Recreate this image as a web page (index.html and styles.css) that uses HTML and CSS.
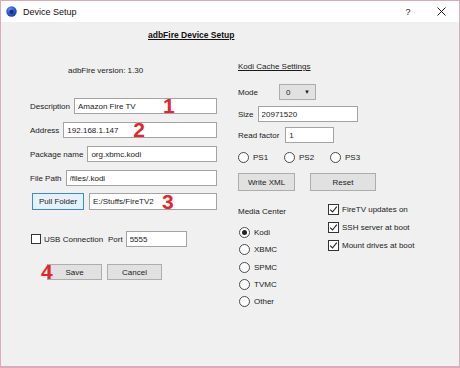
FILE: index.html
```html
<!DOCTYPE html>
<html lang="en">
<head>
  <meta charset="UTF-8">
  <title>Device Setup</title>
  <link rel="stylesheet" href="styles.css">
</head>
<body>

  <div class="window">
    <div class="titlebar">
      <svg class="app-icon" width="11" height="11" viewBox="0 0 11 11">
        <defs>
          <radialGradient id="orb" cx="0.4" cy="0.35" r="0.7">
            <stop offset="0" stop-color="#7fa3ff"/>
            <stop offset="0.5" stop-color="#2d5fd8"/>
            <stop offset="1" stop-color="#1a3a9a"/>
          </radialGradient>
        </defs>
        <circle cx="5.5" cy="5.5" r="5.2" fill="url(#orb)"/>
        <circle cx="5.5" cy="5.8" r="2.2" fill="#1c2f80"/>
      </svg>
      <span class="title">Device Setup</span>
      <span class="help">?</span>
      <svg class="close" width="9" height="9" viewBox="0 0 9 9">
        <path d="M0.5 0.5 L8.5 8.5 M8.5 0.5 L0.5 8.5" stroke="#222" stroke-width="1"/>
      </svg>
    </div>

    <div class="content">
      <h1 class="heading">adbFire Device Setup</h1>

      <div class="columns">
        <div class="left">
          <div class="version">adbFire version: 1.30</div>

          <div class="row first">
            <label>Description</label>
            <div class="field">
              <input type="text" value="Amazon Fire TV">
              <span class="mark m1">1</span>
            </div>
          </div>
          <div class="row">
            <label>Address</label>
            <div class="field">
              <input type="text" value="192.168.1.147">
              <span class="mark m2">2</span>
            </div>
          </div>
          <div class="row">
            <label>Package name</label>
            <div class="field"><input type="text" value="org.xbmc.kodi"></div>
          </div>
          <div class="row">
            <label>File Path</label>
            <div class="field"><input type="text" value="/files/.kodi"></div>
          </div>
          <div class="row pull">
            <button class="btn focus">Pull Folder</button>
            <div class="field">
              <input type="text" value="E:/Stuffs/FireTV2">
              <span class="mark m3">3</span>
            </div>
          </div>
          <div class="row usb">
            <span class="check"></span>
            <label class="usb-label">USB Connection</label>
            <label>Port</label>
            <input class="port" type="text" value="5555">
          </div>
          <div class="row actions">
            <span class="mark m4">4</span>
            <button class="btn">Save</button>
            <button class="btn">Cancel</button>
          </div>
        </div>

        <div class="right">
          <div class="section-title">Kodi Cache Settings</div>

          <div class="row mode">
            <label>Mode</label>
            <div class="combo">0<span class="arrow">&#9660;</span></div>
          </div>
          <div class="row size">
            <label>Size</label>
            <input class="size-input" type="text" value="20971520">
          </div>
          <div class="row read">
            <label>Read factor</label>
            <input class="read-input" type="text" value="1">
          </div>
          <div class="ps-row">
            <span class="opt"><span class="radio"></span>PS1</span>
            <span class="opt"><span class="radio"></span>PS2</span>
            <span class="opt"><span class="radio"></span>PS3</span>
          </div>
          <div class="btn-row">
            <button class="btn write">Write XML</button>
            <button class="btn reset">Reset</button>
          </div>

          <div class="lower">
            <div class="media">
              <div class="media-title">Media Center</div>
              <div class="radio-list">
                <span class="opt"><span class="radio on"></span>Kodi</span>
                <span class="opt"><span class="radio"></span>XBMC</span>
                <span class="opt"><span class="radio"></span>SPMC</span>
                <span class="opt"><span class="radio"></span>TVMC</span>
                <span class="opt"><span class="radio"></span>Other</span>
              </div>
            </div>
            <div class="toggles">
              <span class="opt"><span class="check on"><svg width="9" height="9" viewBox="0 0 9 9"><path d="M1.2 4.6 L3.5 7 L7.8 1.6" fill="none" stroke="#222" stroke-width="1.1"/></svg></span>FireTV updates on</span>
              <span class="opt"><span class="check on"><svg width="9" height="9" viewBox="0 0 9 9"><path d="M1.2 4.6 L3.5 7 L7.8 1.6" fill="none" stroke="#222" stroke-width="1.1"/></svg></span>SSH server at boot</span>
              <span class="opt"><span class="check on"><svg width="9" height="9" viewBox="0 0 9 9"><path d="M1.2 4.6 L3.5 7 L7.8 1.6" fill="none" stroke="#222" stroke-width="1.1"/></svg></span>Mount drives at boot</span>
            </div>
          </div>
        </div>
      </div>
    </div>
  </div>

</body>
</html>
```

FILE: styles.css
```css
* {
  box-sizing: border-box;
}

body {
  margin: 0;
  font-family: "Liberation Sans", Arial, sans-serif;
  font-size: 8px;
  color: #1a1a1a;
  background: #ffffff;
}

.window {
  width: 460px;
  height: 368px;
  border: 1px solid #dcaab8;
  border-bottom-width: 2px;
  background-color: #f0f0f0;
  display: flex;
  flex-direction: column;
}

.titlebar {
  height: 21px;
  background-color: #ffffff;
  display: flex;
  align-items: center;
  padding-left: 5px;
  padding-right: 13px;
}

.app-icon {
  margin-right: 6px;
}

.title {
  font-size: 9px;
  color: #111;
}

.help {
  margin-left: auto;
  width: 14px;
  text-align: center;
  font-size: 9px;
  margin-right: 22px;
}

.content {
  flex: 1;
}

.heading {
  margin: 7px 0 0 0;
  padding-left: 147px;
  font-size: 8.5px;
  line-height: 12px;
  font-weight: bold;
  text-decoration: underline;
  color: #111;
}

.columns {
  display: flex;
  margin-top: 3px;
  padding-left: 29px;
}

.left {
  width: 187px;
}

.right {
  margin-left: 21px;
  width: 200px;
  white-space: nowrap;
}

.version {
  height: 12px;
  line-height: 12px;
  margin-top: 21px;
  padding-left: 38px;
}

.row {
  display: flex;
  align-items: center;
  height: 16px;
  margin-top: 8px;
  gap: 4px;
  white-space: nowrap;
}

.row.first {
  margin-top: 21px;
}

.row.pull {
  height: 17px;
  margin-top: 7px;
  padding-left: 2px;
  gap: 5px;
}

.row.usb {
  margin-top: 21px;
  padding-left: 1px;
  gap: 0;
}

.row.actions {
  margin-top: 17px;
  padding-left: 17px;
  gap: 5px;
  position: relative;
}

.field {
  flex: 1;
  height: 100%;
  position: relative;
}

input {
  width: 100%;
  height: 100%;
  margin: 0;
  padding: 0 3px;
  border: 1px solid #a3a3a3;
  background: #ffffff;
  font-family: "Liberation Sans", Arial, sans-serif;
  font-size: 8px;
  color: #1a1a1a;
  outline: none;
}

.mark {
  position: absolute;
  color: #e3262b;
  font-weight: bold;
  font-size: 21px;
  line-height: 1;
}

.m1 { left: 89px; top: -3px; }
.m2 { left: 70px; top: -3px; }
.m3 { left: 73px; top: -2px; }
.m4 { left: 11px; top: -3px; }

.btn {
  height: 16px;
  width: 55px;
  padding: 0;
  border: 1px solid #adadad;
  background-color: #e1e1e1;
  font-family: "Liberation Sans", Arial, sans-serif;
  font-size: 8px;
  color: #1a1a1a;
}

.btn.focus {
  width: 52px;
  height: 17px;
  border-color: #3c8ad6;
  background-color: #e5f1fb;
}

.check {
  width: 10px;
  height: 10px;
  border: 1px solid #333;
  background: #ffffff;
  display: inline-flex;
  align-items: center;
  justify-content: center;
  flex-shrink: 0;
}

.usb-label {
  margin-left: 3px;
  width: 64px;
}

.port {
  width: 61px;
  margin-left: 3px;
}

.section-title {
  margin-top: 17px;
  height: 12px;
  line-height: 12px;
  text-decoration: underline;
}

.row.mode {
  margin-top: 11px;
  gap: 0;
}

.row.mode label {
  width: 41px;
}

.combo {
  width: 37px;
  height: 16px;
  border: 1px solid #adadad;
  background-color: #e1e1e1;
  display: flex;
  align-items: center;
  padding-left: 6px;
}

.arrow {
  margin-left: auto;
  margin-right: 5px;
  font-size: 6px;
}

.row.size {
  margin-top: 6px;
}

.size-input {
  width: 100px;
}

.row.read {
  margin-top: 5px;
  gap: 6px;
}

.read-input {
  width: 49px;
}

.ps-row {
  display: flex;
  margin-top: 8px;
  height: 12px;
}

.ps-row .opt {
  width: 46px;
}

.opt {
  display: flex;
  align-items: center;
  gap: 4px;
}

.radio {
  width: 11px;
  height: 11px;
  border: 1px solid #4a4a4a;
  border-radius: 50%;
  background: #ffffff;
  display: inline-flex;
  align-items: center;
  justify-content: center;
  flex-shrink: 0;
}

.radio.on::after {
  content: "";
  width: 5px;
  height: 5px;
  border-radius: 50%;
  background: #222;
}

.btn-row {
  display: flex;
  margin-top: 10px;
  gap: 15px;
}

.btn-row .btn {
  height: 18px;
}

.btn.write {
  width: 57px;
}

.btn.reset {
  width: 66px;
}

.lower {
  display: flex;
  margin-top: 9px;
}

.media {
  width: 90px;
  padding-top: 6px;
}

.media-title {
  height: 12px;
  line-height: 12px;
}

.radio-list {
  margin-top: 6px;
  display: flex;
  flex-direction: column;
}

.radio-list .opt {
  height: 17.3px;
  padding-left: 1px;
}

.toggles {
  display: flex;
  flex-direction: column;
}

.toggles .opt {
  height: 18px;
  gap: 3px;
}

.toggles .check {
  width: 11px;
  height: 11px;
}
```
